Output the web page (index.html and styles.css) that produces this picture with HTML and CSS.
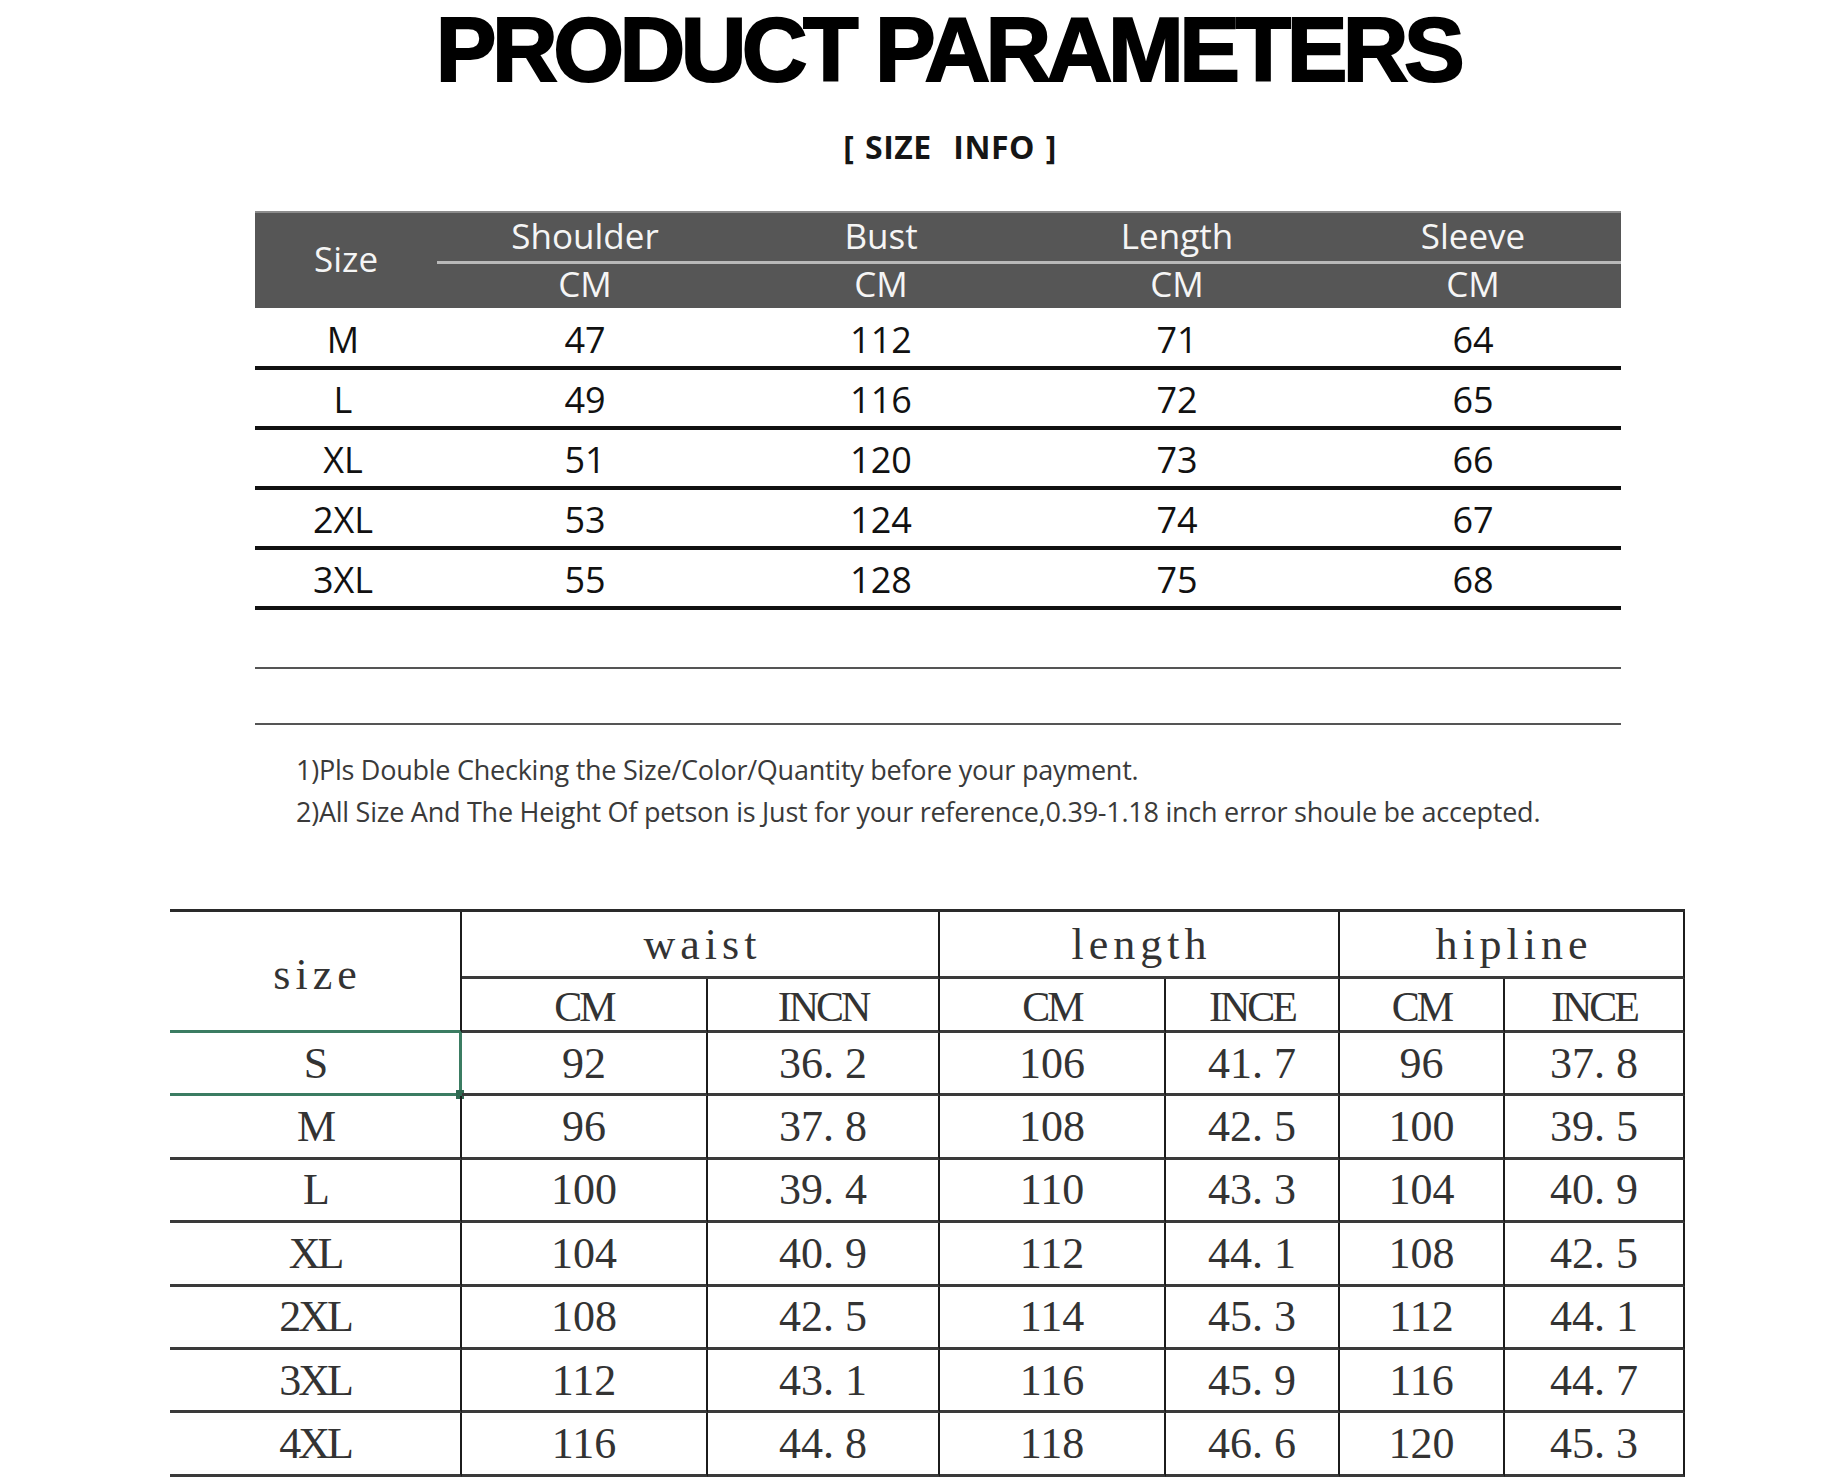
FILE: index.html
```html
<!DOCTYPE html>
<html lang="en">
<head>
<meta charset="utf-8">
<title>Product Parameters</title>
<link rel="stylesheet" href="styles.css">
</head>
<body>
<div class="page">
  <h1 class="title">PRODUCT PARAMETERS</h1>
  <div class="subtitle">[ SIZE&nbsp; INFO ]</div>

  <div class="size-table">
    <div class="head">
      <div class="h-size">Size</div>
      <div class="h-top">Shoulder</div>
      <div class="h-top">Bust</div>
      <div class="h-top">Length</div>
      <div class="h-top">Sleeve</div>
      <div class="h-unit">CM</div>
      <div class="h-unit">CM</div>
      <div class="h-unit">CM</div>
      <div class="h-unit">CM</div>
    </div>
    <div class="row"><span>M</span><span>47</span><span>112</span><span>71</span><span>64</span></div>
    <div class="row"><span>L</span><span>49</span><span>116</span><span>72</span><span>65</span></div>
    <div class="row"><span>XL</span><span>51</span><span>120</span><span>73</span><span>66</span></div>
    <div class="row"><span>2XL</span><span>53</span><span>124</span><span>74</span><span>67</span></div>
    <div class="row"><span>3XL</span><span>55</span><span>128</span><span>75</span><span>68</span></div>
    <div class="row blank"></div>
    <div class="row blank"></div>
  </div>

  <div class="notes">
    <p>1)Pls Double Checking the Size/Color/Quantity before your payment.</p>
    <p>2)All Size And The Height Of petson is Just for your reference,0.39-1.18 inch error shoule be accepted.</p>
  </div>

  <div class="chart">
    <div class="c hd lower c-size">size</div>
    <div class="c hd lower span2">waist</div>
    <div class="c hd lower span2">length</div>
    <div class="c hd lower span2">hipline</div>
    <div class="c hd upper">CM</div>
    <div class="c hd upper">INCN</div>
    <div class="c hd upper">CM</div>
    <div class="c hd upper">INCE</div>
    <div class="c hd upper">CM</div>
    <div class="c hd upper">INCE</div>

    <div class="c upper sel">S</div><div class="c">92</div><div class="c">36. 2</div><div class="c">106</div><div class="c">41. 7</div><div class="c">96</div><div class="c">37. 8</div>
    <div class="c upper">M</div><div class="c">96</div><div class="c">37. 8</div><div class="c">108</div><div class="c">42. 5</div><div class="c">100</div><div class="c">39. 5</div>
    <div class="c upper">L</div><div class="c">100</div><div class="c">39. 4</div><div class="c">110</div><div class="c">43. 3</div><div class="c">104</div><div class="c">40. 9</div>
    <div class="c upper">XL</div><div class="c">104</div><div class="c">40. 9</div><div class="c">112</div><div class="c">44. 1</div><div class="c">108</div><div class="c">42. 5</div>
    <div class="c upper">2XL</div><div class="c">108</div><div class="c">42. 5</div><div class="c">114</div><div class="c">45. 3</div><div class="c">112</div><div class="c">44. 1</div>
    <div class="c upper">3XL</div><div class="c">112</div><div class="c">43. 1</div><div class="c">116</div><div class="c">45. 9</div><div class="c">116</div><div class="c">44. 7</div>
    <div class="c upper">4XL</div><div class="c">116</div><div class="c">44. 8</div><div class="c">118</div><div class="c">46. 6</div><div class="c">120</div><div class="c">45. 3</div>
  </div>
</div>
</body>
</html>
```

FILE: styles.css
```css
* { box-sizing: border-box; }

html, body {
  margin: 0;
  padding: 0;
  background: #ffffff;
}

.page {
  width: 1834px;
  height: 1484px;
  overflow: hidden;
  font-family: "Open Sans", "Noto Sans", sans-serif;
  color: #111;
}

/* ---------- Title ---------- */
.title {
  margin: 0;
  height: 100px;
  line-height: 100px;
  padding-left: 62px;
  text-align: center;
  font-family: "Liberation Sans", Arial, sans-serif;
  font-weight: 700;
  font-size: 91px;
  letter-spacing: -4.5px;
  color: #000;
  white-space: nowrap;
  -webkit-text-stroke: 2px #000;
}

.subtitle {
  margin-top: 27px;
  height: 40px;
  line-height: 40px;
  padding-left: 66px;
  text-align: center;
  font-family: "Open Sans", sans-serif;
  font-weight: 700;
  font-size: 32px;
  letter-spacing: 0.5px;
  word-spacing: 2px;
  color: #151515;
}

/* ---------- Size table (top) ---------- */
.size-table {
  margin-top: 44px;
  margin-left: 255px;
  width: 1366px;
}

.head {
  display: grid;
  grid-template-columns: 182px repeat(4, 296px);
  grid-template-rows: 51px 44px;
  background: #565656;
  border-top: 2px solid #8c8c8c;
  color: #f5f5f5;
  font-size: 35px;
}

.head > div {
  display: flex;
  align-items: center;
  justify-content: center;
}

.h-size {
  grid-row: 1 / 3;
  grid-column: 1;
  padding-bottom: 4px;
}

.h-top {
  border-bottom: 3px solid #b9b9b9;
  padding-bottom: 3px;
}

.h-unit {
  padding-bottom: 6px;
}

.row {
  display: grid;
  grid-template-columns: 182px repeat(4, 296px);
  height: 60px;
  border-bottom: 4px solid #111;
  padding-top: 3px;
  font-size: 36px;
  color: #111;
}

.head + .row {
  margin-top: 2px;
}

.row > span {
  display: flex;
  align-items: center;
  justify-content: center;
}

.row > span:first-child {
  padding-right: 6px;
}

.row.blank {
  border-bottom: 2px solid #555;
  height: 59px;
}

.row.blank + .row.blank {
  height: 56px;
}

/* ---------- Notes ---------- */
.notes {
  margin-top: 24px;
  margin-left: 296px;
  font-family: "Open Sans", sans-serif;
  font-size: 27px;
  letter-spacing: -0.25px;
  line-height: 42px;
  color: #3a3a3a;
}

.notes p {
  margin: 0;
  white-space: nowrap;
}

/* ---------- Chart (bottom) ---------- */
.chart {
  margin-top: 76px;
  margin-left: 170px;
  width: 1515px;
  display: grid;
  grid-template-columns: 292px 246px 232px 226px 174px 165px 180px;
  grid-template-rows: 67px 54px repeat(7, 63.4px);
  border-top: 3px solid #2a2a2a;
  font-family: "Liberation Serif", "Times New Roman", serif;
  font-size: 44px;
  color: #333;
}

.c {
  display: flex;
  align-items: center;
  justify-content: center;
  border-right: 2px solid #1c1c1c;
  border-bottom: 3px solid #3a3a3a;
  position: relative;
}

.c-size {
  grid-row: 1 / 3;
  padding-top: 6px;
  border-bottom-color: #3b7c62;
}

.span2 {
  grid-column: span 2;
}

.lower { letter-spacing: 5px; padding-left: 5px; }

.upper { letter-spacing: -3px; }

.hd.upper { padding-top: 4px; font-size: 42px; }

.sel {
  border-bottom-color: #3b7c62;
  border-right: 3px solid #3b7c62;
}

.sel::after {
  content: "";
  position: absolute;
  right: -5px;
  bottom: -6px;
  width: 8px;
  height: 9px;
  background: #2f6a52;
}
```
